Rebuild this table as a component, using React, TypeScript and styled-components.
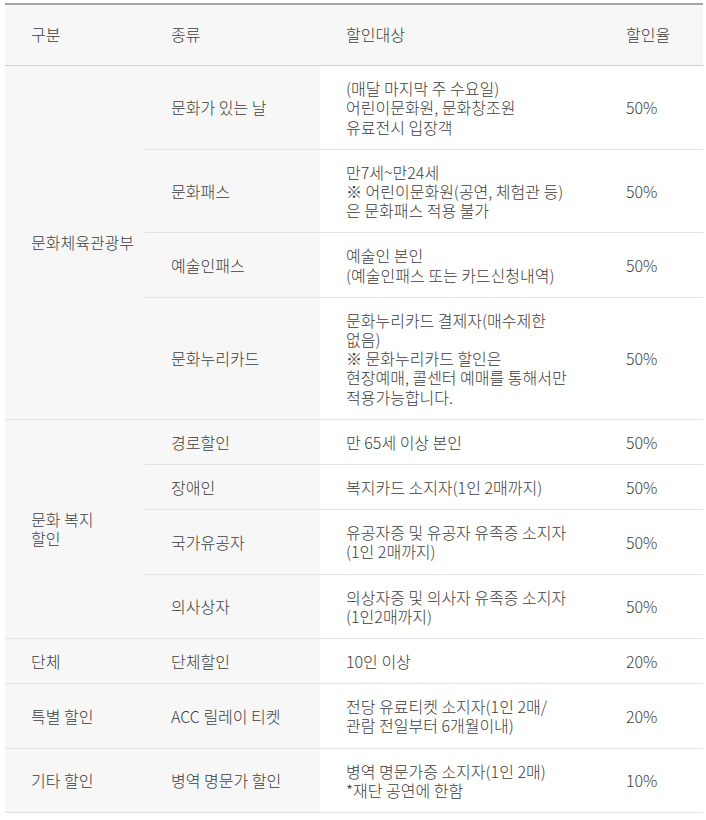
import React from "react";
import styled, { createGlobalStyle } from "styled-components";

const Global = createGlobalStyle`
  html, body { margin: 0; padding: 0; background: #fff; }
  body { font-family: "Noto Sans CJK KR", "Noto Sans", sans-serif; }
`;

const Wrap = styled.div`
  padding: 3px 3px 0 5px;
`;

const Table = styled.table`
  width: 698px;
  border-collapse: collapse;
  table-layout: fixed;
  border-top: 2px solid #a6a6a6;
  font-size: 16px;
  font-weight: 300;
  line-height: 19.2px;
  color: #3c3c3c;
`;

const Th = styled.th`
  background: #f7f7f7;
  font-weight: 300;
  text-align: left;
  padding: 20px 10px 21px 26px;
  border-bottom: 1px solid #cfcfcf;
`;

const Td = styled.td<{ $gray?: boolean; $nowrap?: boolean }>`
  background: ${(p) => (p.$gray ? "#f7f7f7" : "#fff")};
  padding: 13px 10px 12px 26px;
  border-bottom: 1px solid #e2e2e2;
  vertical-align: middle;
  white-space: ${(p) => (p.$nowrap ? "nowrap" : "normal")};
`;

type Row = { kind: string; target: string[]; rate: string };
type Group = { name: string[]; rows: Row[] };

const groups: Group[] = [
  {
    name: ["문화체육관광부"],
    rows: [
      {
        kind: "문화가 있는 날",
        target: ["(매달 마지막 주 수요일)", "어린이문화원, 문화창조원", "유료전시 입장객"],
        rate: "50%",
      },
      {
        kind: "문화패스",
        target: ["만7세~만24세", "※ 어린이문화원(공연, 체험관 등)", "은 문화패스 적용 불가"],
        rate: "50%",
      },
      {
        kind: "예술인패스",
        target: ["예술인 본인", "(예술인패스 또는 카드신청내역)"],
        rate: "50%",
      },
      {
        kind: "문화누리카드",
        target: [
          "문화누리카드 결제자(매수제한",
          "없음)",
          "※ 문화누리카드 할인은",
          "현장예매, 콜센터 예매를 통해서만",
          "적용가능합니다.",
        ],
        rate: "50%",
      },
    ],
  },
  {
    name: ["문화 복지", "할인"],
    rows: [
      { kind: "경로할인", target: ["만 65세 이상 본인"], rate: "50%" },
      { kind: "장애인", target: ["복지카드 소지자(1인 2매까지)"], rate: "50%" },
      {
        kind: "국가유공자",
        target: ["유공자증 및 유공자 유족증 소지자", "(1인 2매까지)"],
        rate: "50%",
      },
      {
        kind: "의사상자",
        target: ["의상자증 및 의사자 유족증 소지자", "(1인2매까지)"],
        rate: "50%",
      },
    ],
  },
  {
    name: ["단체"],
    rows: [{ kind: "단체할인", target: ["10인 이상"], rate: "20%" }],
  },
  {
    name: ["특별 할인"],
    rows: [
      {
        kind: "ACC 릴레이 티켓",
        target: ["전당 유료티켓 소지자(1인 2매/", "관람 전일부터 6개월이내)"],
        rate: "20%",
      },
    ],
  },
  {
    name: ["기타 할인"],
    rows: [
      {
        kind: "병역 명문가 할인",
        target: ["병역 명문가증 소지자(1인 2매)", "*재단 공연에 한함"],
        rate: "10%",
      },
    ],
  },
];

const Lines: React.FC<{ lines: string[] }> = ({ lines }) => (
  <>
    {lines.map((l, i) => (
      <React.Fragment key={i}>
        {i > 0 && <br />}
        {l}
      </React.Fragment>
    ))}
  </>
);

export default function App() {
  return (
    <>
      <Global />
      <Wrap>
        <Table>
          <colgroup>
            <col style={{ width: 140 }} />
            <col style={{ width: 175 }} />
            <col style={{ width: 280 }} />
            <col style={{ width: 103 }} />
          </colgroup>
          <thead>
            <tr>
              <Th>구분</Th>
              <Th>종류</Th>
              <Th>할인대상</Th>
              <Th>할인율</Th>
            </tr>
          </thead>
          <tbody>
            {groups.map((g, gi) =>
              g.rows.map((r, ri) => (
                <tr key={`${gi}-${ri}`}>
                  {ri === 0 && (
                    <Td $gray rowSpan={g.rows.length}>
                      <Lines lines={g.name} />
                    </Td>
                  )}
                  <Td $gray $nowrap>
                    {r.kind}
                  </Td>
                  <Td $nowrap>
                    <Lines lines={r.target} />
                  </Td>
                  <Td>{r.rate}</Td>
                </tr>
              ))
            )}
          </tbody>
        </Table>
      </Wrap>
    </>
  );
}
